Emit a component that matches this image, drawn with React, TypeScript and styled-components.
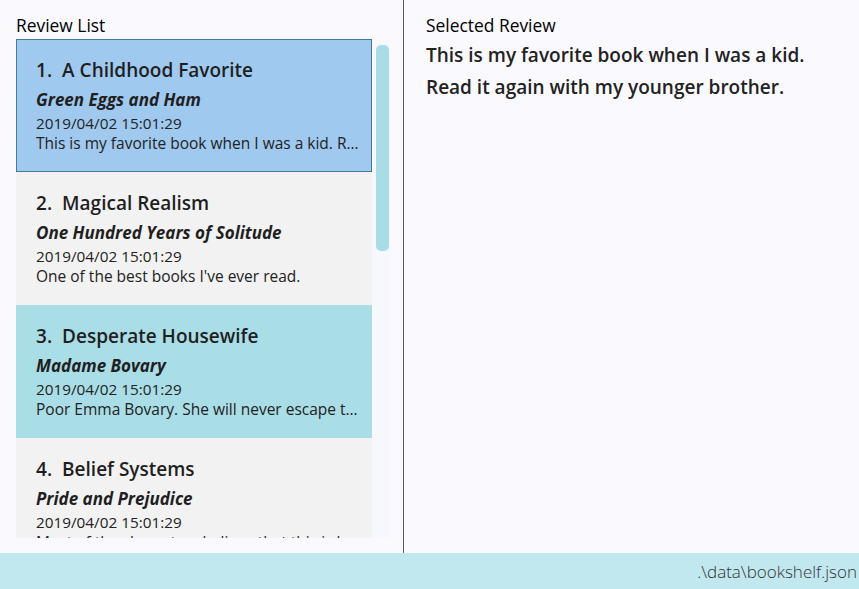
import React from "react";
import styled, { createGlobalStyle } from "styled-components";

const GlobalStyle = createGlobalStyle`
  html, body { margin: 0; padding: 0; }
  body {
    background: #faf9fe;
    font-family: "Open Sans", "Noto Sans", "Liberation Sans", sans-serif;
    color: #222;
  }
  * { box-sizing: border-box; }
`;

const Window = styled.div`
  width: 859px;
  height: 589px;
  display: flex;
  flex-direction: column;
  background: #faf9fe;
  overflow: hidden;
`;

const Main = styled.div`
  flex: 1;
  display: flex;
  min-height: 0;
`;

const LeftPane = styled.section`
  width: 404px;
  flex: none;
  border-right: 1px solid #5c5c5c;
  padding: 14px 12px 14px 16px;
  display: flex;
  flex-direction: column;
`;

const PaneLabel = styled.div`
  font-size: 17.4px;
  line-height: 22px;
  font-weight: 500;
  color: #000;
  margin-bottom: 3px;
`;

const ListView = styled.div`
  display: flex;
  height: 499px;
  overflow: hidden;
`;

const Cells = styled.div`
  width: 356px;
  flex: none;
  display: flex;
  flex-direction: column;
  overflow: hidden;
`;

const Track = styled.div`
  width: 19px;
  flex: none;
  background: #f6f8fe;
  padding: 6px 2px 0 4px;
`;

const Thumb = styled.div`
  width: 13px;
  height: 206px;
  border-radius: 5px;
  background: #a8dde8;
`;

type Variant = "selected" | "even" | "odd";

const cellBg: Record<Variant, string> = {
  selected: "#a0c9ef",
  even: "#a9dee7",
  odd: "#f2f2f2",
};

const Cell = styled.div<{ $variant: Variant }>`
  flex: none;
  height: 133px;
  background: ${(p) => cellBg[p.$variant]};
  border: ${(p) => (p.$variant === "selected" ? "1px solid #3f7d96" : "none")};
  padding: ${(p) => (p.$variant === "selected" ? "13px 11px 14px 19px" : "14px 12px 15px 20px")};
`;

const TitleRow = styled.div`
  display: flex;
  gap: 10px;
  font-size: 19px;
  line-height: 34px;
  font-weight: 600;
  color: #1f1f1f;
  white-space: nowrap;
`;

const BookName = styled.div`
  font-size: 17px;
  line-height: 26px;
  font-weight: 700;
  font-style: italic;
  color: #1f1f1f;
  white-space: nowrap;
`;

const DateLine = styled.div`
  font-size: 15.3px;
  line-height: 20px;
  color: #222;
  white-space: nowrap;
`;

const Snippet = styled.div`
  font-size: 15.5px;
  line-height: 22px;
  margin-top: -1px;
  color: #222;
  white-space: nowrap;
  overflow: hidden;
  text-overflow: ellipsis;
`;

const RightPane = styled.section`
  flex: 1;
  padding: 14px 12px 0 22px;
`;

const ReviewBody = styled.div`
  margin-top: 2px;
  font-size: 19px;
  line-height: 32px;
  font-weight: 600;
  color: #222;
`;

const StatusBar = styled.footer`
  height: 36px;
  flex: none;
  background: #c1e8ee;
  display: flex;
  align-items: center;
  justify-content: flex-end;
  padding-right: 2px;
  font-size: 17px;
  font-weight: 300;
  color: #333;
`;

const reviews = [
  {
    title: "A Childhood Favorite",
    book: "Green Eggs and Ham",
    date: "2019/04/02 15:01:29",
    text: "This is my favorite book when I was a kid. Read it again with my younger brother.",
  },
  {
    title: "Magical Realism",
    book: "One Hundred Years of Solitude",
    date: "2019/04/02 15:01:29",
    text: "One of the best books I've ever read.",
  },
  {
    title: "Desperate Housewife",
    book: "Madame Bovary",
    date: "2019/04/02 15:01:29",
    text: "Poor Emma Bovary. She will never escape the boredom of provincial life.",
  },
  {
    title: "Belief Systems",
    book: "Pride and Prejudice",
    date: "2019/04/02 15:01:29",
    text: "Most of the characters believe that this is how marriage works.",
  },
];

export default function App() {
  return (
    <>
      <GlobalStyle />
      <Window>
        <Main>
          <LeftPane>
            <PaneLabel>Review List</PaneLabel>
            <ListView>
              <Cells>
                {reviews.map((r, i) => (
                  <Cell key={i} $variant={i === 0 ? "selected" : i % 2 === 1 ? "odd" : "even"}>
                    <TitleRow>
                      <span>{i + 1}.</span>
                      <span>{r.title}</span>
                    </TitleRow>
                    <BookName>{r.book}</BookName>
                    <DateLine>{r.date}</DateLine>
                    <Snippet>{r.text}</Snippet>
                  </Cell>
                ))}
              </Cells>
              <Track>
                <Thumb />
              </Track>
            </ListView>
          </LeftPane>
          <RightPane>
            <PaneLabel>Selected Review</PaneLabel>
            <ReviewBody>
              This is my favorite book when I was a kid.
              <br />
              Read it again with my younger brother.
            </ReviewBody>
          </RightPane>
        </Main>
        <StatusBar>.\data\bookshelf.json</StatusBar>
      </Window>
    </>
  );
}
